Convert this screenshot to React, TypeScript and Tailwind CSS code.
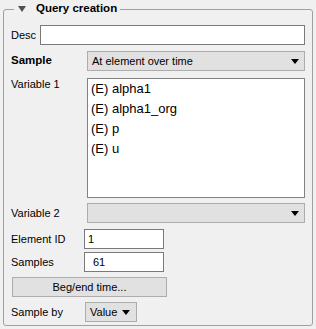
import React from "react";

const font = { fontFamily: '"Liberation Sans", Arial, sans-serif' };

function Arrow() {
  return (
    <svg width="8" height="5" viewBox="0 0 8 5" className="shrink-0">
      <polygon points="0,0 8,0 4,5" fill="#000" />
    </svg>
  );
}

function Combo({ text, w, arrowMr = "mr-[5px]" }: { text: string; w: string; arrowMr?: string }) {
  return (
    <div
      className={`${w} h-[20px] flex items-center justify-between bg-[#e1e1e1] border border-[#adadad] pl-[4px] ${arrowMr} text-[11px] text-black`}
    >
      <span className="whitespace-nowrap">{text}</span>
      <Arrow />
    </div>
  );
}

export default function App() {
  return (
    <div className="w-[316px] h-[329px] bg-[#f0f0f0] text-black overflow-hidden" style={font}>
      <div className="pt-[9px] pl-[3px]">
        <div className="relative w-[310px] h-[317px] border border-[#a0a0a0] rounded-[3px] pl-[7px] pt-[15px]">
          <div className="absolute left-[10px] top-[-8px] h-[14px] flex items-center bg-[#f0f0f0] pl-[4px] pr-[3px]">
            <svg width="8" height="6" viewBox="0 0 8 6" className="mr-[10px]">
              <polygon points="0,0 8,0 4,6" fill="#505050" />
            </svg>
            <span className="text-[11.5px] font-bold leading-none whitespace-nowrap">Query creation</span>
          </div>

          {/* Desc */}
          <div className="flex items-center h-[20px]">
            <span className="w-[29px] text-[11px]">Desc</span>
            <div className="w-[265px] h-[20px] bg-white border border-[#7a7a7a]" />
          </div>

          {/* Sample */}
          <div className="flex items-center h-[20px] mt-[6px]">
            <span className="w-[76px] text-[11.5px] font-bold">Sample</span>
            <Combo text="At element over time" w="w-[218px]" arrowMr="pr-[5px]" />
          </div>

          {/* Variable 1 */}
          <div className="flex items-start mt-[7px]">
            <span className="w-[76px] text-[11px] leading-[13px] pt-[0px]">Variable 1</span>
            <div className="w-[218px] h-[120px] bg-white border border-[#828282] pl-[3px] text-[13px] leading-[20px]">
              <div>(E) alpha1</div>
              <div>(E) alpha1_org</div>
              <div>(E) p</div>
              <div>(E) u</div>
            </div>
          </div>

          {/* Variable 2 */}
          <div className="flex items-center h-[20px] mt-[5px]">
            <span className="w-[76px] text-[11px]">Variable 2</span>
            <Combo text="" w="w-[218px]" arrowMr="pr-[5px]" />
          </div>

          {/* Element ID */}
          <div className="flex items-center h-[20px] mt-[6px]">
            <span className="w-[73px] text-[11px] whitespace-nowrap">Element ID</span>
            <div className="w-[80px] h-[20px] bg-white border border-[#7a7a7a] flex items-center pl-[3px] text-[11px]">1</div>
          </div>

          {/* Samples */}
          <div className="flex items-center h-[20px] mt-[3px]">
            <span className="w-[73px] text-[11px]">Samples</span>
            <div className="w-[80px] h-[20px] bg-white border border-[#7a7a7a] flex items-center pl-[8px] text-[11px]">61</div>
          </div>

          {/* Button */}
          <div className="mt-[5px] ml-[1px] w-[155px] h-[20px] bg-[#e1e1e1] border border-[#adadad] flex items-center justify-center text-[11px]">
            Beg/end time...
          </div>

          {/* Sample by */}
          <div className="flex items-center h-[20px] mt-[5px]">
            <span className="w-[74px] text-[11px] whitespace-nowrap">Sample by</span>
            <Combo text="Value" w="w-[52px]" arrowMr="pr-[6px]" />
          </div>
        </div>
      </div>
    </div>
  );
}
